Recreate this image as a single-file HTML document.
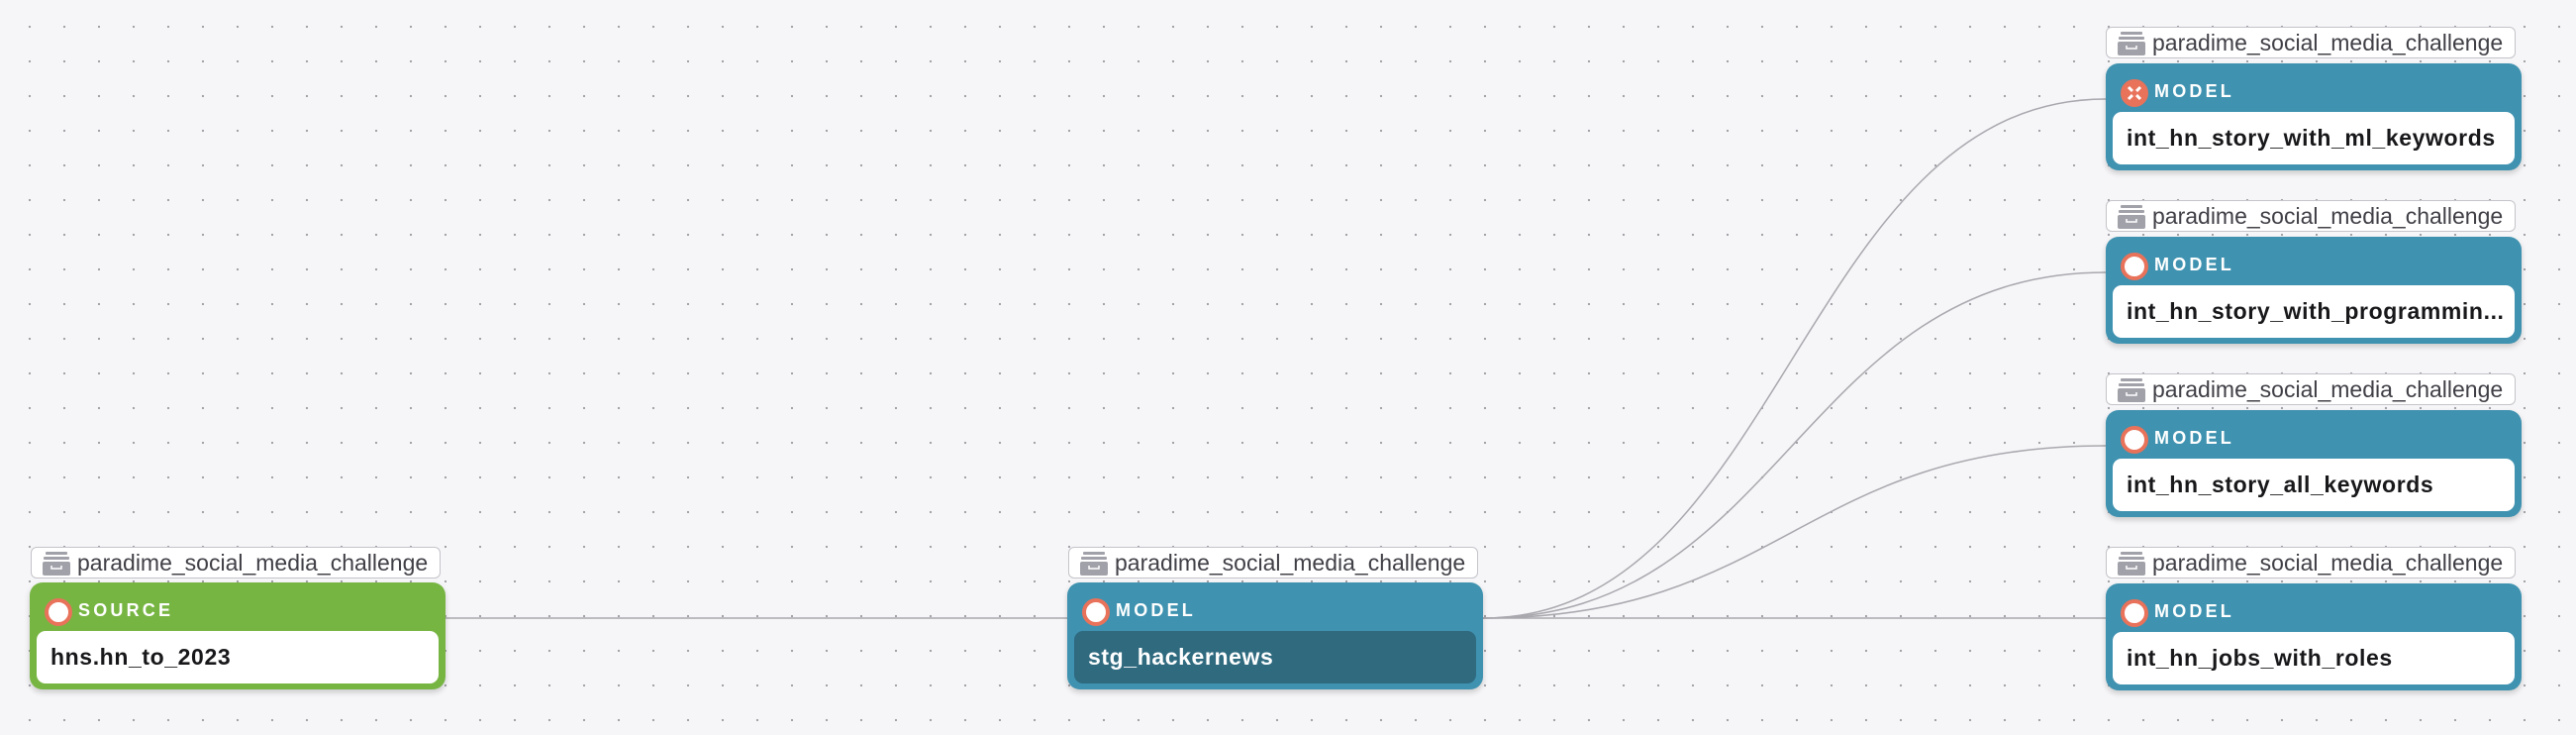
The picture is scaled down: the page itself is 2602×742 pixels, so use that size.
<!DOCTYPE html>
<html><head><style>
body{margin:0;width:2602px;height:742px;overflow:hidden;background-color:#f6f6f8;
background-image:radial-gradient(circle,#9a9aa2 0.9px,transparent 1.3px);background-size:35px 35px;background-position:12.5px 9.5px;
font-family:"Liberation Sans",sans-serif;position:relative}
.lbl{position:absolute;width:414px;height:32px;border:1.5px solid #c4c4ca;border-radius:6px;background:#fff;box-sizing:border-box;color:#3f3f46;font-size:23px;line-height:30px;padding-left:46px}
.lbl .ic{position:absolute;left:11px;top:4px;width:28px;height:24px}
.node{position:absolute;width:420px;height:108px;border-radius:13px;box-shadow:0 3px 6px rgba(0,0,0,.18)}
.hd{position:absolute;left:49px;top:18px;color:#fff;font-weight:bold;font-size:18px;letter-spacing:3.2px}
.cir{position:absolute;left:15px;top:16px;width:20px;height:20px;border-radius:50%;background:#fff;border:4px solid #e8725a}
.in{position:absolute;left:7px;top:49px;width:406px;height:53px;border-radius:9px;background:#fff;font-weight:bold;font-size:23px;line-height:53px;padding-left:14px;box-sizing:border-box;color:#18181b;letter-spacing:.6px}
.g{background:#77b543}.b{background:#3f92b0}
</style></head><body>
<svg style="position:absolute;left:0;top:0" width="2602" height="742">
<g fill="none" stroke="#a8a8ae" stroke-width="1.5">
<path d="M449 624 L1078 624"/>
<path d="M1498 624 C1800 624 1820 100 2127 100"/>
<path d="M1498 624 C1800 624 1820 275 2127 275"/>
<path d="M1498 624 C1800 624 1820 450 2127 450"/>
<path d="M1498 624 L2127 624"/>
</g></svg>

<div class="lbl" style="left:31px;top:552px"><svg class="ic" viewBox="0 0 28 24"><rect x="3" y="0" width="22" height="3" rx="1" fill="#a1a1aa"/><rect x="1" y="5" width="26" height="3" rx="1" fill="#a1a1aa"/><rect x="0" y="10" width="28" height="14" rx="2" fill="#a1a1aa"/><path d="M9 14v3h10v-3" stroke="#fff" stroke-width="1.5" fill="none"/></svg>paradime_social_media_challenge</div>
<div class="node g" style="left:30px;top:588px"><div class="cir"></div><div class="hd">SOURCE</div><div class="in">hns.hn_to_2023</div></div>

<div class="lbl" style="left:1079px;top:552px"><svg class="ic" viewBox="0 0 28 24"><rect x="3" y="0" width="22" height="3" rx="1" fill="#a1a1aa"/><rect x="1" y="5" width="26" height="3" rx="1" fill="#a1a1aa"/><rect x="0" y="10" width="28" height="14" rx="2" fill="#a1a1aa"/><path d="M9 14v3h10v-3" stroke="#fff" stroke-width="1.5" fill="none"/></svg>paradime_social_media_challenge</div>
<div class="node b" style="left:1078px;top:588px"><div class="cir"></div><div class="hd">MODEL</div><div class="in" style="background:#2f6a7f;color:#fff">stg_hackernews</div></div>

<div class="lbl" style="left:2127px;top:27px"><svg class="ic" viewBox="0 0 28 24"><rect x="3" y="0" width="22" height="3" rx="1" fill="#a1a1aa"/><rect x="1" y="5" width="26" height="3" rx="1" fill="#a1a1aa"/><rect x="0" y="10" width="28" height="14" rx="2" fill="#a1a1aa"/><path d="M9 14v3h10v-3" stroke="#fff" stroke-width="1.5" fill="none"/></svg>paradime_social_media_challenge</div>
<div class="node b" style="left:2127px;top:64px"><div class="cir" style="background:#e8725a;border-color:#e8725a"><svg width="20" height="20" viewBox="0 0 20 20"><path d="M4 4L16 16M16 4L4 16" stroke="#fff" stroke-width="3"/><circle cx="10" cy="10" r="3" fill="#e8725a"/></svg></div><div class="hd">MODEL</div><div class="in">int_hn_story_with_ml_keywords</div></div>

<div class="lbl" style="left:2127px;top:202px"><svg class="ic" viewBox="0 0 28 24"><rect x="3" y="0" width="22" height="3" rx="1" fill="#a1a1aa"/><rect x="1" y="5" width="26" height="3" rx="1" fill="#a1a1aa"/><rect x="0" y="10" width="28" height="14" rx="2" fill="#a1a1aa"/><path d="M9 14v3h10v-3" stroke="#fff" stroke-width="1.5" fill="none"/></svg>paradime_social_media_challenge</div>
<div class="node b" style="left:2127px;top:239px"><div class="cir"></div><div class="hd">MODEL</div><div class="in">int_hn_story_with_programmin...</div></div>

<div class="lbl" style="left:2127px;top:377px"><svg class="ic" viewBox="0 0 28 24"><rect x="3" y="0" width="22" height="3" rx="1" fill="#a1a1aa"/><rect x="1" y="5" width="26" height="3" rx="1" fill="#a1a1aa"/><rect x="0" y="10" width="28" height="14" rx="2" fill="#a1a1aa"/><path d="M9 14v3h10v-3" stroke="#fff" stroke-width="1.5" fill="none"/></svg>paradime_social_media_challenge</div>
<div class="node b" style="left:2127px;top:414px"><div class="cir"></div><div class="hd">MODEL</div><div class="in">int_hn_story_all_keywords</div></div>

<div class="lbl" style="left:2127px;top:552px"><svg class="ic" viewBox="0 0 28 24"><rect x="3" y="0" width="22" height="3" rx="1" fill="#a1a1aa"/><rect x="1" y="5" width="26" height="3" rx="1" fill="#a1a1aa"/><rect x="0" y="10" width="28" height="14" rx="2" fill="#a1a1aa"/><path d="M9 14v3h10v-3" stroke="#fff" stroke-width="1.5" fill="none"/></svg>paradime_social_media_challenge</div>
<div class="node b" style="left:2127px;top:589px"><div class="cir"></div><div class="hd">MODEL</div><div class="in">int_hn_jobs_with_roles</div></div>
</body></html>
